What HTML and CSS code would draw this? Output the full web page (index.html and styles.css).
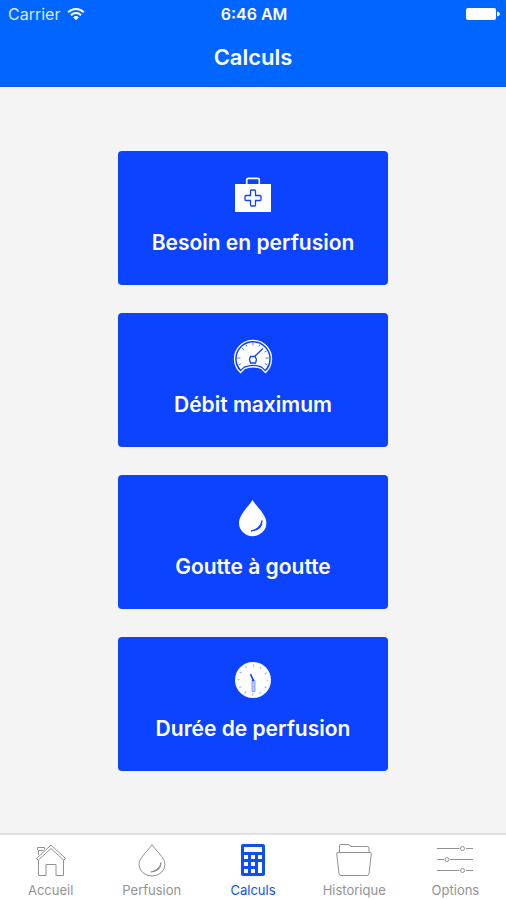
FILE: index.html
```html
<!DOCTYPE html>
<html lang="fr">
<head>
    <meta charset="UTF-8">
    <meta name="viewport" content="width=device-width, initial-scale=1.0">
    <title>Calculs</title>
    <link rel="stylesheet" href="styles.css">
</head>
<body>
    <header class="header">
        <div class="status-bar">
            <div class="carrier">
                <span>Carrier</span>
                <svg width="18" height="14" viewBox="0 0 18 14" fill="none" stroke="#fff" stroke-width="2">
                    <path d="M1.2 5.2a11 11 0 0 1 15.6 0"/>
                    <path d="M4 8.2a7 7 0 0 1 10 0"/>
                    <path d="M9 13.2L6.2 10.4a4 4 0 0 1 5.6 0z" fill="#fff" stroke="none"/>
                </svg>
            </div>
            <span class="time">6:46 AM</span>
            <div class="battery">
                <svg width="34" height="14" viewBox="0 0 34 14" fill="#fff">
                    <rect x="0" y="1" width="30" height="12" rx="2"/>
                    <path d="M31 4.5q3 .8 3 2.5t-3 2.5z"/>
                </svg>
            </div>
        </div>
        <h1>Calculs</h1>
    </header>

    <main class="content">
        <button type="button" class="card">
            <svg width="40" height="40" viewBox="0 0 40 40" fill="none">
                <path d="M13.7 10V6.2q0-1.800 1.800-1.800h9q1.800 0 1.800 1.800V10" stroke="#fff" stroke-width="1.6"/>
                <rect x="2" y="10" width="36" height="28" fill="#fff"/>
                <path d="M18.500 16h3q1 0 1 1v4.500H27q1 0 1 1v3q0 1-1 1h-4.500V31q0 1-1 1h-3q-1 0-1-1v-4.500H13q-1 0-1-1v-3q0-1 1-1h4.500V17q0-1 1-1z" stroke="#0c43ff" stroke-width="1.3"/>
            </svg>
            <span>Besoin en perfusion</span>
        </button>
        <button type="button" class="card">
            <svg width="40" height="40" viewBox="0 0 40 40" fill="none">
                <path d="M7.5 36.5A18.500 18.500 0 1 1 32.5 36.5L28.5 32.5Q20 29 11.5 32.5z" stroke="#fff" stroke-width="1.3"/>
                <path d="M7.8 33.5A16.300 16.300 0 1 1 32.2 33.5L28.8 30.5Q20 27 11.2 30.5z" fill="#fff"/>
                <g stroke="#0c43ff">
                    <path d="M4 22h3.5M36 22h-3.5M20 6.5v3M8.8 11.8l2.2 2.2M5.7 29l2.500-1.500M34.3 29l-2.500-1.500M13 8.500l1 2M27 8.500l-1 2M33.500 15l-2 1" stroke-width=".7"/>
                    <path d="M21.5 20.500L30 12.500" stroke-width="1.3"/>
                    <path d="M17.5 20.500h4.500l1.500 3-1 3.500h-5l-1-3.500z" stroke-width="1.3"/>
                </g>
            </svg>
            <span>Débit maximum</span>
        </button>
        <button type="button" class="card">
            <svg width="40" height="40" viewBox="0 0 40 40" fill="none">
                <path d="M19.5 2C16 8 6 16.500 6 25a13.700 13.200 0 0 0 27.400 0C33.400 16.500 23 8 19.500 2z" fill="#fff"/>
                <path d="M29 22.500Q30 32 18 33Q27.500 30.500 29 22.500z" fill="#0c43ff" stroke="#0c43ff" stroke-width=".9"/>
            </svg>
            <span>Goutte à goutte</span>
        </button>
        <button type="button" class="card">
            <svg width="40" height="40" viewBox="0 0 40 40" fill="none">
                <circle cx="20" cy="20" r="18" fill="#fff"/>
                <circle cx="20" cy="20" r="14.500" stroke="#8da5ff" stroke-width="2" stroke-dasharray="1 6.592" stroke-dashoffset=".5"/>
                <path d="M16.8 14.500l1.500-.8 2.500 6-1.200.8z" fill="#0c43ff"/>
                <path d="M19 20.500h3v11h-3z" fill="#b9c7ff" stroke="#7892ff" stroke-width=".8"/>
                <circle cx="20" cy="20" r="1.200" fill="#0c43ff"/>
            </svg>
            <span>Durée de perfusion</span>
        </button>
    </main>

    <nav class="tab-bar">
        <a href="#accueil" class="tab">
            <svg width="36" height="36" viewBox="0 0 36 36" fill="none" stroke="currentColor">
                <path d="M3.5 16.500L18 3l14.500 13.500-1.700 1.700L18 6.500 5.200 18.200z"/>
                <path d="M5.5 18v15.500h7.500V22.500h10v11h7.500V18M5.500 13V8.500h5"/>
                <path d="M4.500 8V5.500h7v2"/>
            </svg>
            <span>Accueil</span>
        </a>
        <a href="#perfusion" class="tab">
            <svg width="36" height="36" viewBox="0 0 36 36" fill="none" stroke="currentColor">
                <path d="M18 2.500C14.500 8.500 5 15.500 5 22.500a13 11.500 0 0 0 26 0C31 15.500 21.500 8.500 18 2.500z"/>
                <path d="M27 20.500Q27.500 29 17 30Q26 27.500 27 20.500z" fill="currentColor"/>
            </svg>
            <span>Perfusion</span>
        </a>
        <a href="#calculs" class="tab active" aria-current="page">
            <svg width="36" height="36" viewBox="0 0 36 36">
                <rect x="6" y="2" width="24" height="32" rx="2" fill="currentColor"/>
                <g fill="#fff">
                    <rect x="9" y="5" width="18" height="5"/>
                    <rect x="9" y="13" width="4" height="4"/>
                    <rect x="16" y="13" width="4" height="4"/>
                    <rect x="23" y="13" width="4" height="4"/>
                    <rect x="9" y="20" width="4" height="4"/>
                    <rect x="16" y="20" width="4" height="4"/>
                    <rect x="9" y="27" width="4" height="4"/>
                    <rect x="16" y="27" width="4" height="4"/>
                    <rect x="23" y="20" width="4" height="11"/>
                </g>
            </svg>
            <span>Calculs</span>
        </a>
        <a href="#historique" class="tab">
            <svg width="36" height="36" viewBox="0 0 36 36" fill="none" stroke="currentColor">
                <path d="M3.5 10V4q0-1.500 1.500-1.500h7.500q1.500 0 2 2h17q1.500 0 1.500 1.500v4"/>
                <path d="M2 10.500h32q1.500 0 1.300 1.500L33 31.500q-.3 2-2 2H5q-1.700 0-2-2L.7 12q-.2-1.500 1.300-1.500z"/>
            </svg>
            <span>Historique</span>
        </a>
        <a href="#options" class="tab">
            <svg width="36" height="36" viewBox="0 0 36 36" fill="none" stroke="currentColor">
                <path d="M0 6.500h22.500M29 6.500h7M0 17.500h7M13 17.500h23M0 28.500h22.500M29 28.500h7"/>
                <circle cx="25.500" cy="6.500" r="2"/>
                <circle cx="10" cy="17.500" r="2"/>
                <circle cx="25.500" cy="28.500" r="2"/>
            </svg>
            <span>Options</span>
        </a>
    </nav>
</body>
</html>
```
FILE: styles.css
```css
* {
    box-sizing: border-box;
}

body {
    margin: 0;
    min-height: 100vh;
    display: flex;
    flex-direction: column;
    font-family: Inter, "Liberation Sans", sans-serif;
    background-color: #f4f4f4;
}

.header {
    background-color: #0066ff;
    color: #fff;
    border-bottom: 1px solid #1a56e8;
    padding-bottom: 14px;
}

.status-bar {
    display: grid;
    grid-template-columns: 1fr auto 1fr;
    align-items: center;
    height: 28px;
    padding: 0 6px 0 8px;
    font-size: 16px;
}

.carrier {
    display: flex;
    align-items: center;
    gap: 7px;
    color: #d9e8ff;
}

.time {
    font-weight: 600;
}

.battery {
    display: flex;
    justify-content: flex-end;
}

.header h1 {
    margin: 14px 0 0;
    font-size: 22px;
    line-height: 30px;
    font-weight: 600;
    text-align: center;
}

.content {
    flex: 1;
    display: flex;
    flex-direction: column;
    align-items: center;
    justify-content: center;
    gap: 28px;
    padding: 30px 16px 28px;
}

.card {
    width: 270px;
    max-width: 100%;
    display: flex;
    flex-direction: column;
    align-items: center;
    gap: 15px;
    padding: 23px 8px 28px;
    border: none;
    border-radius: 4px;
    background-color: #0c43ff;
    color: #fff;
    font-family: inherit;
    font-size: 21px;
    line-height: 28px;
    font-weight: 600;
    cursor: pointer;
}

.card:hover {
    background-color: #0037e0;
}

.tab-bar {
    display: flex;
    height: 67px;
    border-top: 2px solid #e0e0e0;
    background-color: #fff;
}

.tab {
    flex: 1;
    display: flex;
    flex-direction: column;
    align-items: center;
    gap: 4px;
    padding-top: 7px;
    color: #929292;
    font-size: 13px;
    line-height: 16px;
    text-decoration: none;
}

.tab.active {
    color: #0c50f0;
}
```
